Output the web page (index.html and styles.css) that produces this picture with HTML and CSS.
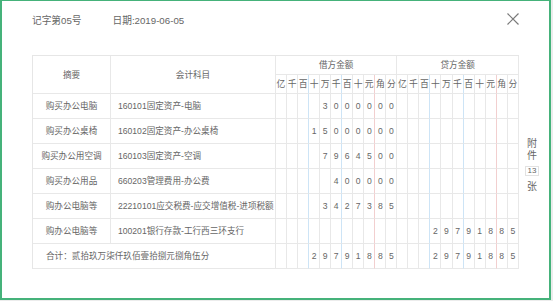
FILE: index.html
```html
<!DOCTYPE html>
<html lang="zh-CN">
<head>
<meta charset="utf-8">
<title>凭证</title>
<link rel="stylesheet" href="styles.css">
</head>
<body>
<div class="dialog">
  <div class="head">
    <span class="no">记字第05号</span>
    <span class="date">日期:2019-06-05</span>
    <svg class="close" width="12" height="12" viewBox="0 0 12 12"><path d="M0.5 0.5 L11.5 11.5 M11.5 0.5 L0.5 11.5" stroke="#7a7a7a" stroke-width="1.2" fill="none"/></svg>
  </div>
  <div class="main">
    <table class="voucher">
      <colgroup>
        <col class="c-sum"><col class="c-acc">
        <col><col><col><col><col><col><col><col><col><col><col>
        <col><col><col><col><col><col><col><col><col><col><col>
      </colgroup>
      <thead>
        <tr class="h1">
          <th rowspan="2" class="t-sum">摘要</th>
          <th rowspan="2" class="t-acc">会计科目</th>
          <th colspan="11">借方金额</th>
          <th colspan="11">贷方金额</th>
        </tr>
        <tr class="h2">
          <th>亿</th><th>千</th><th class="b">百</th><th>十</th><th>万</th><th class="b">千</th><th>百</th><th>十</th><th class="r">元</th><th>角</th><th>分</th>
          <th>亿</th><th>千</th><th class="b">百</th><th>十</th><th>万</th><th class="b">千</th><th>百</th><th>十</th><th class="r">元</th><th>角</th><th>分</th>
        </tr>
      </thead>
      <tbody>
        <tr>
          <td class="sum">购买办公电脑</td><td class="acc">160101固定资产-电脑</td>
          <td></td><td></td><td class="b"></td><td></td><td>3</td><td class="b">0</td><td>0</td><td>0</td><td class="r">0</td><td>0</td><td>0</td>
          <td></td><td></td><td class="b"></td><td></td><td></td><td class="b"></td><td></td><td></td><td class="r"></td><td></td><td></td>
        </tr>
        <tr>
          <td class="sum">购买办公桌椅</td><td class="acc">160102固定资产-办公桌椅</td>
          <td></td><td></td><td class="b"></td><td>1</td><td>5</td><td class="b">0</td><td>0</td><td>0</td><td class="r">0</td><td>0</td><td>0</td>
          <td></td><td></td><td class="b"></td><td></td><td></td><td class="b"></td><td></td><td></td><td class="r"></td><td></td><td></td>
        </tr>
        <tr>
          <td class="sum">购买办公用空调</td><td class="acc">160103固定资产-空调</td>
          <td></td><td></td><td class="b"></td><td></td><td>7</td><td class="b">9</td><td>6</td><td>4</td><td class="r">5</td><td>0</td><td>0</td>
          <td></td><td></td><td class="b"></td><td></td><td></td><td class="b"></td><td></td><td></td><td class="r"></td><td></td><td></td>
        </tr>
        <tr>
          <td class="sum">购买办公用品</td><td class="acc">660203管理费用-办公费</td>
          <td></td><td></td><td class="b"></td><td></td><td></td><td class="b">4</td><td>0</td><td>0</td><td class="r">0</td><td>0</td><td>0</td>
          <td></td><td></td><td class="b"></td><td></td><td></td><td class="b"></td><td></td><td></td><td class="r"></td><td></td><td></td>
        </tr>
        <tr>
          <td class="sum">购办公电脑等</td><td class="acc">22210101应交税费-应交增值税-进项税额</td>
          <td></td><td></td><td class="b"></td><td></td><td>3</td><td class="b">4</td><td>2</td><td>7</td><td class="r">3</td><td>8</td><td>5</td>
          <td></td><td></td><td class="b"></td><td></td><td></td><td class="b"></td><td></td><td></td><td class="r"></td><td></td><td></td>
        </tr>
        <tr>
          <td class="sum">购办公电脑等</td><td class="acc">100201银行存款-工行西三环支行</td>
          <td></td><td></td><td class="b"></td><td></td><td></td><td class="b"></td><td></td><td></td><td class="r"></td><td></td><td></td>
          <td></td><td></td><td class="b"></td><td>2</td><td>9</td><td class="b">7</td><td>9</td><td>1</td><td class="r">8</td><td>8</td><td>5</td>
        </tr>
        <tr>
          <td colspan="2" class="total">合计：贰拾玖万柒仟玖佰壹拾捌元捌角伍分</td>
          <td></td><td></td><td class="b"></td><td>2</td><td>9</td><td class="b">7</td><td>9</td><td>1</td><td class="r">8</td><td>8</td><td>5</td>
          <td></td><td></td><td class="b"></td><td>2</td><td>9</td><td class="b">7</td><td>9</td><td>1</td><td class="r">8</td><td>8</td><td>5</td>
        </tr>
      </tbody>
    </table>
    <div class="side">
      <span class="lbl">附</span>
      <span class="lbl">件</span>
      <span class="cnt">13</span>
      <span class="lbl last">张</span>
    </div>
  </div>
</div>
</body>
</html>
```

FILE: styles.css
```css
html, body {
  margin: 0;
  padding: 0;
}
body {
  background: #ececec;
  font-family: "Liberation Sans", "Noto Sans CJK SC", sans-serif;
  color: #666;
}
.dialog {
  box-sizing: border-box;
  width: 551px;
  height: 300px;
  background: #fff;
  border: 2px solid #45b27a;
  border-top-width: 1px;
  padding: 9px 0 0 30px;
}
.head {
  width: 487px;
  height: 20px;
  display: flex;
  align-items: center;
  font-size: 9.7px;
  color: #666;
}
.no {
  margin-right: 31px;
}
.close {
  margin-left: auto;
  margin-top: -2px;
}
.main {
  display: flex;
  margin-top: 25px;
}
.voucher {
  table-layout: fixed;
  width: 487px;
  border-collapse: separate;
  border-spacing: 0;
  border-top: 1px solid #e6e6e6;
  border-left: 1px solid #e6e6e6;
  font-size: 8.6px;
  color: #666;
}
.c-sum { width: 78px; }
.c-acc { width: 165px; }
.voucher th,
.voucher td {
  box-sizing: content-box;
  padding: 0;
  border-right: 1px solid #e8e8e8;
  border-bottom: 1px solid #e8e8e8;
  font-weight: normal;
  text-align: center;
  white-space: nowrap;
  overflow: hidden;
  line-height: 10px;
}
.voucher .h1 th,
.voucher .h2 th {
  height: 18px;
}
.voucher .h2 th {
  font-size: 8.8px;
}
.voucher td {
  height: 24px;
}
.voucher .b {
  border-right-color: #cde4f6;
}
.voucher .r {
  border-right-color: #f2cfcf;
}
.voucher td.acc {
  text-align: left;
  padding-left: 7px;
}
.voucher td.total {
  text-align: left;
  padding-left: 13px;
}
.side {
  width: 26px;
  display: flex;
  flex-direction: column;
  align-items: center;
  justify-content: center;
  padding-top: 6px;
  font-size: 10px;
  color: #666;
}
.lbl {
  line-height: 12px;
}
.cnt {
  box-sizing: border-box;
  width: 14px;
  height: 10px;
  border: 1px solid #e2e2e2;
  font-size: 8px;
  line-height: 8px;
  text-align: center;
  margin: 4px 0 5px;
}
```
